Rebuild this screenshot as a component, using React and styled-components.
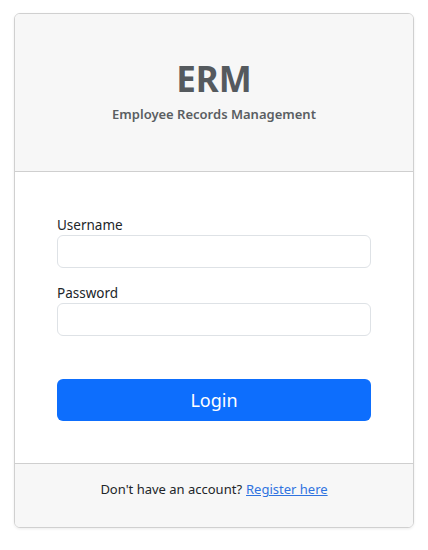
import React from 'react';
import styled, { createGlobalStyle } from 'styled-components';

const GlobalStyle = createGlobalStyle`
  body {
    margin: 0;
    background: #fff;
    font-family: "Noto Sans", "Open Sans", sans-serif;
    color: #212529;
  }
  * { box-sizing: border-box; }
`;

const Page = styled.div`
  padding: 13px 14px 22px 14px;
`;

const Card = styled.div`
  border: 1px solid #d0d0d0;
  border-radius: 6px;
  overflow: hidden;
  box-shadow: 0 1px 3px rgba(0, 0, 0, 0.08);
`;

const Header = styled.div`
  height: 158px;
  background: #f7f7f7;
  border-bottom: 1px solid #cfcfcf;
  display: flex;
  flex-direction: column;
  align-items: center;
  padding-top: 43px;
`;

const Title = styled.h1`
  margin: 0;
  font-size: 35px;
  line-height: 44px;
  font-weight: 700;
  color: #555a5e;
`;

const Subtitle = styled.div`
  margin-top: 4px;
  font-size: 13px;
  font-weight: 600;
  color: #5a5e62;
`;

const Body = styled.form`
  padding: 43px 42px 42px 42px;
  display: flex;
  flex-direction: column;
`;

const Field = styled.div`
  display: flex;
  flex-direction: column;
  margin-bottom: ${p => p.$gap}px;
`;

const Label = styled.label`
  font-size: 13.5px;
  line-height: 20px;
  color: #212529;
`;

const Input = styled.input`
  height: 33px;
  border: 1px solid #dee2e6;
  border-radius: 6px;
  padding: 4px 10px;
  font: inherit;
  outline: none;
`;

const Button = styled.button`
  height: 42px;
  border: none;
  border-radius: 6px;
  background: #0d6efd;
  color: #fff;
  font-family: inherit;
  font-size: 18px;
  cursor: pointer;
`;

const Footer = styled.div`
  height: 64px;
  background: #f7f7f7;
  border-top: 1px solid #cfcfcf;
  padding-top: 15px;
  line-height: 20px;
  text-align: center;
  font-size: 13px;
  color: #212529;
`;

const Link = styled.a`
  color: #2f73e0;
  text-decoration: underline;
  margin-left: 4px;
`;

export default function App() {
  return (
    <Page>
      <GlobalStyle />
      <Card>
        <Header>
          <Title>ERM</Title>
          <Subtitle>Employee Records Management</Subtitle>
        </Header>
        <Body onSubmit={e => e.preventDefault()}>
          <Field $gap={15}>
            <Label>Username</Label>
            <Input type="text" />
          </Field>
          <Field $gap={43}>
            <Label>Password</Label>
            <Input type="password" />
          </Field>
          <Button type="submit">Login</Button>
        </Body>
        <Footer>
          Don't have an account?<Link href="#">Register here</Link>
        </Footer>
      </Card>
    </Page>
  );
}
